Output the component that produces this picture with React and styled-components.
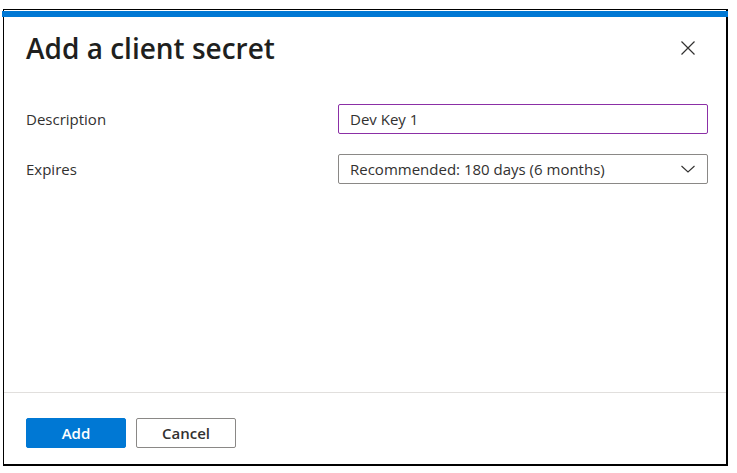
import styled, { createGlobalStyle } from "styled-components";

const GlobalStyle = createGlobalStyle`
  html, body {
    margin: 0;
    padding: 0;
    background: #ffffff;
  }
  body {
    font-family: "Open Sans", "Noto Sans", sans-serif;
    color: #323130;
  }
`;

const Frame = styled.div`
  box-sizing: border-box;
  margin: 9px 0 0 3px;
  width: 725px;
  height: 457px;
  border: solid #000;
  border-width: 1px 2px 2px 1px;
  padding-top: 1px;
  display: flex;
  flex-direction: column;
`;

const AccentBar = styled.div`
  height: 6px;
  margin: 0 -2px 0 -2px;
  background: #0078d4;
`;

const Header = styled.div`
  display: flex;
  justify-content: space-between;
  align-items: center;
  padding: 13px 30px 0 22px;
`;

const Title = styled.h1`
  margin: 0;
  font-size: 28px;
  line-height: 36px;
  font-weight: 600;
  color: #201f1e;
`;

const CloseButton = styled.button`
  border: none;
  background: none;
  padding: 0;
  width: 16px;
  height: 16px;
  display: flex;
  cursor: pointer;
  svg {
    width: 16px;
    height: 16px;
  }
`;

const Body = styled.div`
  flex: 1;
  display: flex;
  flex-direction: column;
  gap: 20px;
  padding: 38px 18px 0 22px;
`;

const Row = styled.div`
  display: grid;
  grid-template-columns: 312px 1fr;
  align-items: center;
`;

const Label = styled.label`
  font-size: 15px;
  color: #323130;
`;

const Field = styled.div`
  box-sizing: border-box;
  height: 30px;
  display: flex;
  align-items: center;
  justify-content: space-between;
  padding: 0 11px;
  border: 1px solid ${(p) => (p.$focused ? "#8b2fa6" : "#8a8886")};
  border-radius: 2px;
  font-size: 15px;
  color: #323130;
`;

const Divider = styled.div`
  height: 1px;
  background: #e1dfdd;
`;

const Footer = styled.div`
  display: flex;
  gap: 10px;
  padding: 25px 22px 16px 22px;
`;

const Button = styled.button`
  box-sizing: border-box;
  width: 100px;
  height: 30px;
  border-radius: 2px;
  font-family: inherit;
  font-size: 15px;
  font-weight: 600;
  cursor: pointer;
  border: 1px solid ${(p) => (p.$primary ? "#0078d4" : "#8a8886")};
  background: ${(p) => (p.$primary ? "#0078d4" : "#ffffff")};
  color: ${(p) => (p.$primary ? "#ffffff" : "#323130")};
`;

const Chevron = () => (
  <svg width="16" height="16" viewBox="0 0 16 16" fill="none">
    <path d="M1.5 5 L8 11 L14.5 5" stroke="#323130" strokeWidth="1.1" />
  </svg>
);

const CloseIcon = () => (
  <svg viewBox="0 0 16 16" fill="none">
    <path d="M1.5 1.5 L14.5 14.5 M14.5 1.5 L1.5 14.5" stroke="#323130" strokeWidth="1.2" />
  </svg>
);

export default function App() {
  return (
    <>
      <GlobalStyle />
      <Frame>
        <AccentBar />
        <Header>
          <Title>Add a client secret</Title>
          <CloseButton aria-label="Close">
            <CloseIcon />
          </CloseButton>
        </Header>
        <Body>
          <Row>
            <Label>Description</Label>
            <Field $focused>Dev Key 1</Field>
          </Row>
          <Row>
            <Label>Expires</Label>
            <Field>
              Recommended: 180 days (6 months)
              <Chevron />
            </Field>
          </Row>
        </Body>
        <Divider />
        <Footer>
          <Button $primary>Add</Button>
          <Button>Cancel</Button>
        </Footer>
      </Frame>
    </>
  );
}
